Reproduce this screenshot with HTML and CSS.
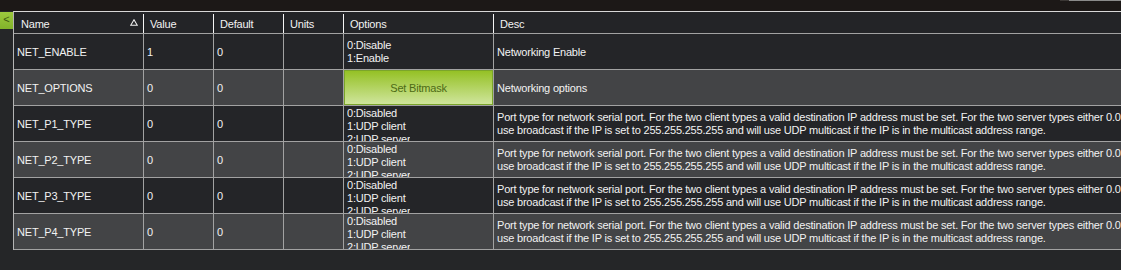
FILE: index.html
```html
<!doctype html>
<html lang="en">
  <head>
    <meta charset="UTF-8" />
    <meta name="viewport" content="width=device-width, initial-scale=1.0" />
    <title>Full Parameter List</title>
    <link rel="stylesheet" href="styles.css">
  </head>
  <body>
    <div class="topbar">
      <div class="scroll-stub"></div>
    </div>

    <div class="main">
      <div class="side">
        <button class="collapse">&lt;</button>
      </div>

      <div class="table">
        <div class="head">
          <div class="th th-name">
            <span>Name</span>
            <svg class="sort" width="8" height="7" viewBox="0 0 8 7">
              <path d="M4 0.8 L7.3 6.3 L0.7 6.3 Z" fill="none" stroke="#f0f0f0" stroke-width="1.1" />
            </svg>
          </div>
          <div class="th th-value">Value</div>
          <div class="th th-default">Default</div>
          <div class="th th-units">Units</div>
          <div class="th th-options">Options</div>
          <div class="th th-desc">Desc</div>
        </div>

        <div class="rows">
          <div class="cell">NET_ENABLE</div>
          <div class="cell">1</div>
          <div class="cell">0</div>
          <div class="cell"></div>
          <div class="cell multi"><div>0:Disable<br>1:Enable</div></div>
          <div class="cell">Networking Enable</div>

          <div class="cell alt">NET_OPTIONS</div>
          <div class="cell alt">0</div>
          <div class="cell alt">0</div>
          <div class="cell alt"></div>
          <div class="cell alt btn-cell"><button class="bitmask">Set Bitmask</button></div>
          <div class="cell alt">Networking options</div>

          <div class="cell">NET_P1_TYPE</div>
          <div class="cell">0</div>
          <div class="cell">0</div>
          <div class="cell"></div>
          <div class="cell multi clip"><div class="opts">0:Disabled<br>1:UDP client<br>2:UDP server</div></div>
          <div class="cell multi"><div>Port type for network serial port. For the two client types a valid destination IP address must be set. For the two server types either 0.0.0.0 or a local address can be used. The UDP client type will<br>use broadcast if the IP is set to 255.255.255.255 and will use UDP multicast if the IP is in the multicast address range.</div></div>

          <div class="cell alt">NET_P2_TYPE</div>
          <div class="cell alt">0</div>
          <div class="cell alt">0</div>
          <div class="cell alt"></div>
          <div class="cell alt multi clip"><div class="opts">0:Disabled<br>1:UDP client<br>2:UDP server</div></div>
          <div class="cell alt multi"><div>Port type for network serial port. For the two client types a valid destination IP address must be set. For the two server types either 0.0.0.0 or a local address can be used. The UDP client type will<br>use broadcast if the IP is set to 255.255.255.255 and will use UDP multicast if the IP is in the multicast address range.</div></div>

          <div class="cell">NET_P3_TYPE</div>
          <div class="cell">0</div>
          <div class="cell">0</div>
          <div class="cell"></div>
          <div class="cell multi clip"><div class="opts">0:Disabled<br>1:UDP client<br>2:UDP server</div></div>
          <div class="cell multi"><div>Port type for network serial port. For the two client types a valid destination IP address must be set. For the two server types either 0.0.0.0 or a local address can be used. The UDP client type will<br>use broadcast if the IP is set to 255.255.255.255 and will use UDP multicast if the IP is in the multicast address range.</div></div>

          <div class="cell alt">NET_P4_TYPE</div>
          <div class="cell alt">0</div>
          <div class="cell alt">0</div>
          <div class="cell alt"></div>
          <div class="cell alt multi clip"><div class="opts">0:Disabled<br>1:UDP client<br>2:UDP server</div></div>
          <div class="cell alt multi"><div>Port type for network serial port. For the two client types a valid destination IP address must be set. For the two server types either 0.0.0.0 or a local address can be used. The UDP client type will<br>use broadcast if the IP is set to 255.255.255.255 and will use UDP multicast if the IP is in the multicast address range.</div></div>
        </div>
      </div>
    </div>
  </body>
</html>
```

FILE: styles.css
```css
body {
  margin: 0;
  background-color: #252628;
  color: #f2f2f2;
  font-family: "Liberation Sans", Arial, sans-serif;
  font-size: 11px;
  letter-spacing: -0.2px;
  overflow: hidden;
  width: 1121px;
  height: 270px;
}

.topbar {
  height: 11px;
  background-color: #1c1817;
  display: flex;
  justify-content: flex-end;
}

.scroll-stub {
  width: 52px;
  height: 1px;
  background-color: #8a8a8a;
  border-left: 9px solid #3a3634;
}

.main {
  display: flex;
}

.side {
  width: 13px;
  flex-shrink: 0;
}

.collapse {
  display: block;
  width: 13px;
  height: 17px;
  margin: 1px 0 0;
  padding: 0 0 2px;
  border: none;
  background: linear-gradient(#9cc93e, #82b22a);
  color: #3d5a10;
  font-family: "Liberation Sans", Arial, sans-serif;
  font-size: 11px;
  line-height: 15px;
}

.table {
  flex-shrink: 0;
  border-top: 1px solid #d8d8d8;
  border-left: 1px solid #b4b4b4;
}

.head {
  display: flex;
  height: 21px;
  background-color: #232427;
}

.th {
  box-sizing: border-box;
  height: 19px;
  margin-top: 2px;
  padding-left: 6px;
  display: flex;
  align-items: center;
  border-left: 1px solid #f4f4f4;
}

.th-name {
  width: 129px;
  border-left: none;
  justify-content: space-between;
  padding-left: 7px;
  padding-right: 5px;
}

.sort {
  margin-top: -3px;
}

.th-value,
.th-default {
  width: 70px;
}

.th-units {
  width: 60px;
}

.th-options {
  width: 150px;
}

.th-desc {
  width: 900px;
}

.rows {
  display: grid;
  grid-template-columns: 129px 69px 69px 59px 149px 899px;
  grid-auto-rows: 35px;
  gap: 1px;
  padding: 1px 0;
  background-color: #a2a2a2;
}

.cell {
  background-color: #242528;
  padding-left: 3px;
  display: flex;
  align-items: center;
  overflow: hidden;
  white-space: nowrap;
}

.cell.alt {
  background-color: #434446;
}

.multi {
  line-height: 13px;
}

.clip {
  align-items: flex-start;
  padding-top: 1px;
}

.opts {
  height: 34px;
  overflow: hidden;
}

.btn-cell {
  padding: 0;
}

.bitmask {
  width: 100%;
  height: 100%;
  border: 1px solid #7ba52a;
  background: linear-gradient(#95c125, #cfe59c);
  color: #4d6a16;
  font-family: "Liberation Sans", Arial, sans-serif;
  font-size: 11px;
  letter-spacing: -0.2px;
  padding: 0;
}
```
